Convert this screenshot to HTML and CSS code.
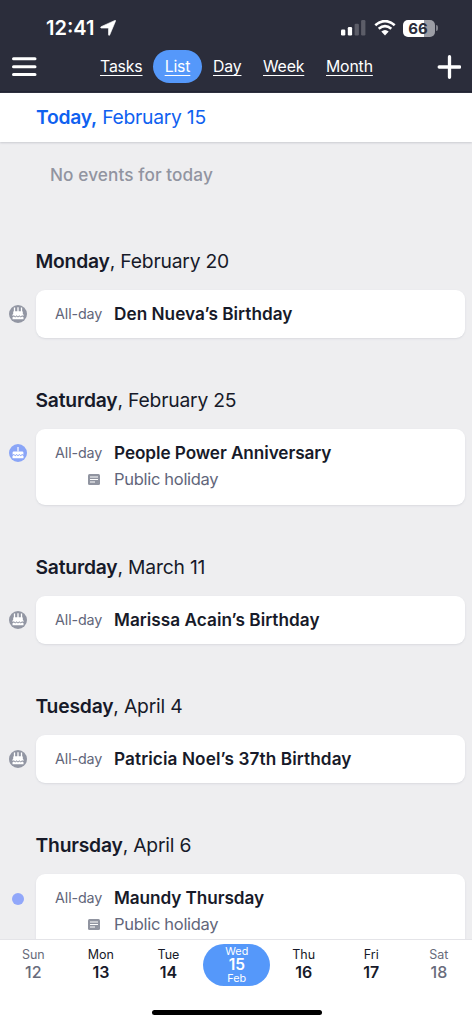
FILE: index.html
```html
<!DOCTYPE html>
<html lang="en">
<head>
<meta charset="utf-8">
<title>Calendar</title>
<link rel="stylesheet" href="styles.css">
</head>
<body>
<svg width="0" height="0" class="defs">
  <symbol id="cakes" viewBox="0 0 18 18">
    <circle cx="9" cy="9" r="9" fill="#9296a3"/>
    <path d="M5.500 2.500v5M9 2.200v5M12.500 2.500v5" stroke="#fff" stroke-width="1.300"/>
    <path d="M5 6.300h8q.8 0 .8.800v1.800h-9.600V7.100q0-.8.800-.8z" fill="#fff"/>
    <path d="M4.700 8.700h8.600q1.200 0 1.200 1.200v1.200l-1.400-.8-1.400 1.200-1.400-1.200L9 11.500l-1.400-1.200-1.300 1.200-1.400-1.200-1.400.8V9.900q0-1.200 1.200-1.200z" fill="#fff"/>
    <path d="M3.500 12.200l1.400-.8 1.400 1.100 1.300-1.100L9 12.500l1.400-1.100 1.400 1.100 1.300-1.100 1.400.8v2h-11z" fill="#fff"/>
  </symbol>
  <symbol id="cake" viewBox="0 0 18 18">
    <circle cx="9" cy="9" r="9" fill="#8aa5f7"/>
    <path d="M9 3v4.500" stroke="#fff" stroke-width="1.200"/>
    <path d="M4.800 7.400h8.400q1.200 0 1.200 1.200v2.200l-1.300-.8-1.400 1.200-1.400-1.200L9 11.200 7.600 10l-1.400 1.200L4.900 10l-1.300.8V8.600q0-1.200 1.200-1.200z" fill="#fff"/>
    <path d="M3.500 12l1.400-.9 1.400 1.100 1.300-1.100L9 12.200l1.400-1.100 1.400 1.100 1.300-1.100 1.400.9v2.200h-11z" fill="#fff"/>
  </symbol>
  <symbol id="note" viewBox="0 0 12 11">
    <path d="M1.500 0h9Q12 0 12 1.500v6L8.800 11H1.500Q0 11 0 9.500v-8Q0 0 1.500 0z" fill="#9094a0"/>
    <path d="M12 7v2.500Q12 11 10.500 11H8z" fill="#9094a0"/>
    <path d="M2 3h8M2 5.500h8M2 8h5" stroke="#fff" stroke-width="1.100"/>
  </symbol>
</svg>
<div class="app">
  <header class="top">
    <div class="status">
      <span class="clock">12:41</span>
      <svg class="arrow" width="16" height="16" viewBox="0 0 16 16"><path d="M14.900.4Q15.900.2 15.500 1.200L9.700 15Q9 16 8.500 14.900V8.100H1.300Q0 7.700 1 6.700z" fill="#fff" stroke="#fff" stroke-width=".6" stroke-linejoin="round"/></svg>
      <svg class="signal" width="25" height="16" viewBox="0 0 25 16">
        <rect x="0" y="9.500" width="4.300" height="6" rx="1.200" fill="#fff"/>
        <rect x="6.800" y="7" width="4.300" height="8.500" rx="1.200" fill="#fff"/>
        <rect x="13.600" y="3.700" width="4.300" height="11.800" rx="1.200" fill="#5c5d68"/>
        <rect x="20.100" y="0" width="4.300" height="15.500" rx="1.200" fill="#5c5d68"/>
      </svg>
      <svg class="wifi" width="22" height="16" viewBox="0 0 22 16">
        <path d="M1.300 5.300Q11-3 20.700 5.300M4.700 8.800Q11 3.500 17.300 8.800" fill="none" stroke="#fff" stroke-width="2.700"/>
        <path d="M7.300 11.600Q11 8.600 14.700 11.600L11 15.400z" fill="#fff"/>
      </svg>
      <span class="battery"><span class="cell">66</span><span class="nub"></span></span>
    </div>
    <nav class="nav">
      <svg class="menu" width="26" height="20" viewBox="0 0 26 20"><path d="M2.500 1.800h21.500M2.500 9.700h21.500M2.500 17.600h21.500" stroke="#fff" stroke-width="3" stroke-linecap="round"/></svg>
      <div class="tabs">
        <a class="tab tasks">Tasks</a><a class="tab active">List</a><a class="tab day">Day</a><a class="tab week">Week</a><a class="tab month">Month</a>
      </div>
      <svg class="plus" width="24" height="24" viewBox="0 0 24 24"><path d="M12.500 1.700v20.600M2.200 12h20.600" stroke="#fff" stroke-width="3.300" stroke-linecap="round"/></svg>
    </nav>
  </header>
  <div class="today"><b>Today,</b> February 15</div>
  <main class="list">
    <p class="empty">No events for today</p>
    <section class="group">
      <h2 class="date"><b>Monday</b>, February 20</h2>
      <div class="row"><svg class="mark"><use href="#cakes"/></svg>
        <div class="card"><span class="time">All-day</span><span class="name">Den Nueva’s Birthday</span></div></div>
    </section>
    <section class="group">
      <h2 class="date"><b>Saturday</b>, February 25</h2>
      <div class="row"><svg class="mark"><use href="#cake"/></svg>
        <div class="card"><span class="time">All-day</span><span class="name tight">People Power Anniversary</span><svg class="note"><use href="#note"/></svg><span class="detail">Public holiday</span></div></div>
    </section>
    <section class="group">
      <h2 class="date"><b>Saturday</b>, March 11</h2>
      <div class="row"><svg class="mark"><use href="#cakes"/></svg>
        <div class="card"><span class="time">All-day</span><span class="name">Marissa Acain’s Birthday</span></div></div>
    </section>
    <section class="group">
      <h2 class="date"><b>Tuesday</b>, April 4</h2>
      <div class="row"><svg class="mark"><use href="#cakes"/></svg>
        <div class="card"><span class="time">All-day</span><span class="name wide">Patricia Noel’s 37th Birthday</span></div></div>
    </section>
    <section class="group">
      <h2 class="date"><b>Thursday</b>, April 6</h2>
      <div class="row"><span class="dot"></span>
        <div class="card"><span class="time">All-day</span><span class="name tight">Maundy Thursday</span><svg class="note"><use href="#note"/></svg><span class="detail">Public holiday</span></div></div>
    </section>
  </main>
  <footer class="bottom">
    <div class="week-strip">
      <div class="cell-day off"><span>Sun</span><b>12</b></div>
      <div class="cell-day"><span>Mon</span><b>13</b></div>
      <div class="cell-day"><span>Tue</span><b>14</b></div>
      <div class="cell-day current"><span>Wed</span><b>15</b><span>Feb</span></div>
      <div class="cell-day"><span>Thu</span><b>16</b></div>
      <div class="cell-day"><span>Fri</span><b>17</b></div>
      <div class="cell-day off"><span>Sat</span><b>18</b></div>
    </div>
    <div class="home"></div>
  </footer>
</div>
</body>
</html>
```
FILE: styles.css
```css
* { box-sizing: border-box; }
body { margin: 0; font-family: Inter, "Liberation Sans", sans-serif; color: #171a29; background: #eeeef0; }
.defs { display: none; }
.app { width: 472px; height: 1024px; display: flex; flex-direction: column; overflow: hidden; }
.top { height: 93px; flex: none; background: #2b2d3b; border-bottom: 2px solid #222433; color: #fff; }
.status { height: 49px; padding: 7px 34px 0 46px; display: flex; align-items: center; }
.clock { width: 54px; font-size: 20px; font-weight: 600; letter-spacing: 0; white-space: nowrap; }
.signal { margin-left: 225px; }
.wifi { margin-left: 8px; }
.battery { margin-left: 7px; display: flex; align-items: center; gap: 1px; }
.cell { width: 32px; height: 17px; padding-right: 2px; border-radius: 5px; background: linear-gradient(90deg, #fff 66%, #9c9da5 66%); color: #2b2d3b; font-size: 15px; font-weight: 700; line-height: 17px; text-align: center; }
.nub { width: 2px; height: 6px; border-radius: 0 2px 2px 0; background: #80818b; }
.nav { height: 35px; padding: 0 11px; display: flex; align-items: center; }
.menu { flex: none; }
.tabs { flex: 1; display: flex; align-items: center; padding-left: 63px; }
.tab { font-size: 15.800px; letter-spacing: -0.15px; line-height: 33px; text-decoration: underline; text-underline-offset: 3px; text-decoration-thickness: 1px; white-space: nowrap; }
.tasks { width: 53px; }
.active { width: 49px; height: 33px; background: #5598fa; border-radius: 17px; text-align: center; }
.day { margin-left: 11px; width: 50px; }
.week { width: 63px; }
.today { height: 48.500px; flex: none; padding: 0 0 0 36px; background: #fff; color: #0f61f0; font-size: 19.300px; letter-spacing: -0.25px; line-height: 48px; box-shadow: 0 1px 2px #c9cad0; position: relative; }
.today b, .date b { font-weight: 600; }
.list { flex: 1; min-height: 0; overflow: hidden; }
.empty { margin: 21px 0 62.500px 50px; font-size: 17.200px; letter-spacing: 0.1px; line-height: 24px; font-weight: 500; color: #9194a0; }
.group { margin-bottom: 50.600px; }
.date { margin: 0 0 17px 35.500px; font-size: 19.300px; letter-spacing: -0.2px; line-height: 24px; font-weight: 400; }
.row { display: flex; padding: 0 7.500px 0 8.500px; }
.mark { width: 18px; height: 18px; margin: 15px 9px 0 0; flex: none; }
.dot { width: 12px; height: 12px; margin: 19px 12px 0 3px; flex: none; border-radius: 50%; background: #91a7fa; }
.card { flex: 1; padding: 10px 0 10.500px 19.500px; background: #fff; border-radius: 9px; box-shadow: 0 1px 2px #d9dadf; display: grid; grid-template-columns: 47px 1fr; column-gap: 12px; line-height: 27px; }
.time { font-size: 14.300px; letter-spacing: -0.1px; line-height: 27px; color: #62667a; white-space: nowrap; }
.name { font-size: 17.200px; font-weight: 600; letter-spacing: 0.03px; }
.tight { letter-spacing: -0.08px; }
.wide { letter-spacing: 0.1px; }
.note { width: 12px; height: 11px; margin: 8px 0 0 32.500px; }
.detail { font-size: 16.500px; letter-spacing: -0.3px; color: #62667a; height: 28px; }
.bottom { height: 85px; flex: none; background: #fff; border-top: 1px solid #e4e4e8; }
.week-strip { display: grid; grid-template-columns: repeat(7, 67.600px); height: 52px; margin-left: -0.500px; }
.cell-day { padding-top: 5.500px; display: flex; flex-direction: column; align-items: center; font-size: 12.500px; line-height: 18px; }
.cell-day b { font-size: 16px; font-weight: 600; line-height: 17px; }
.off { color: #686b7b; }
.off b { font-weight: 500; }
.current { width: 67px; height: 42px; margin: 4px 0 0 1px; padding-top: 1px; border-radius: 21px; background: #5598fa; color: #fff; font-size: 10.800px; line-height: 13px; }
.current b { line-height: 14px; font-size: 15.500px; }
.home { width: 170px; height: 5px; margin: 18px 0 0 152px; border-radius: 3px; background: #000; }
```
